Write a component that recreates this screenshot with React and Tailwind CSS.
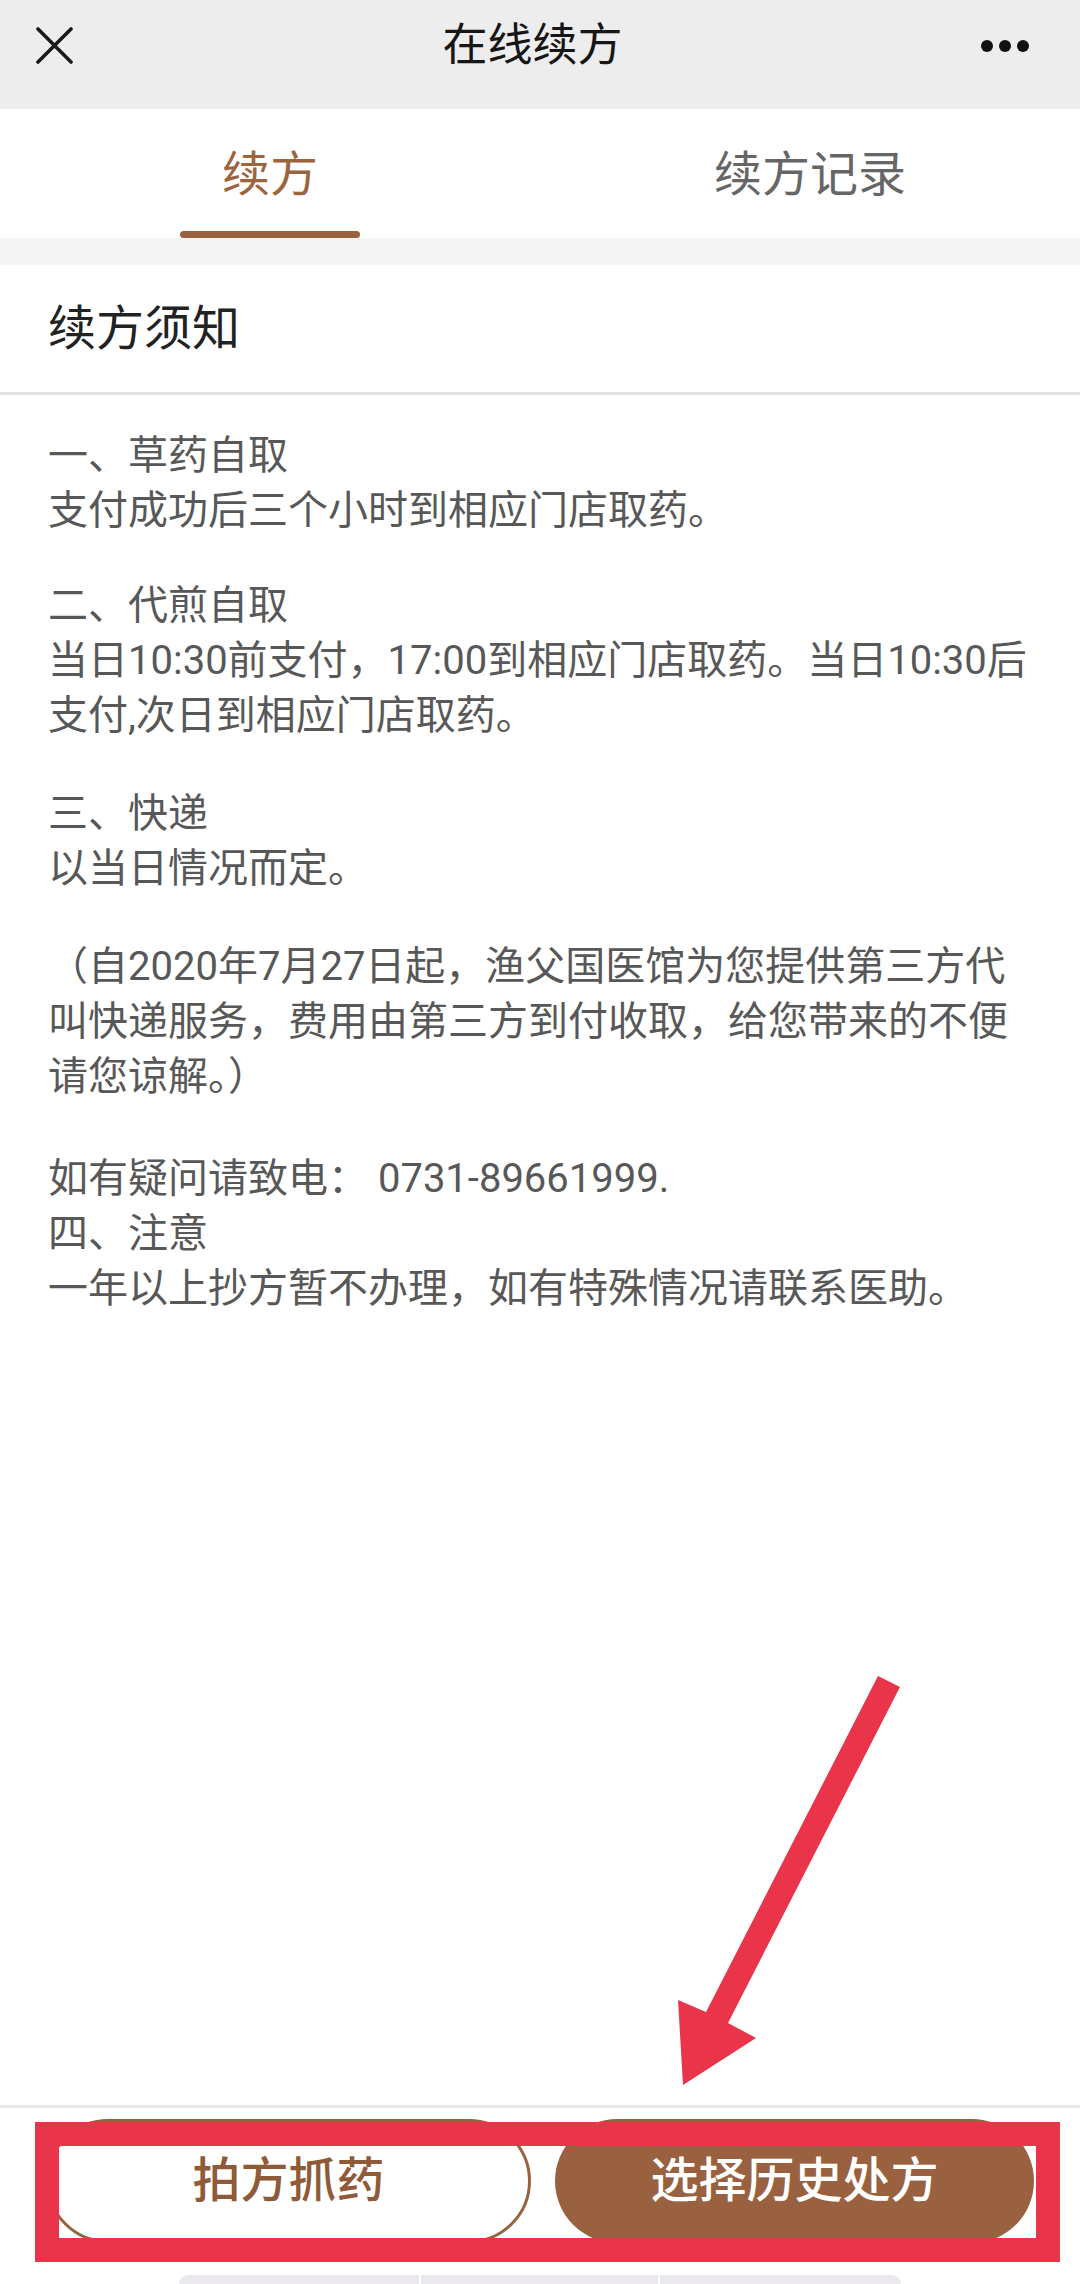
export default function App() {
  const p = "block whitespace-nowrap";
  return (
    <div className="relative w-[1080px] h-[2284px] bg-white flex flex-col overflow-hidden font-['Roboto','Noto_Sans_CJK_SC',sans-serif]">
      {/* Header */}
      <div className="h-[109px] shrink-0 bg-[#ededed] grid grid-cols-[1fr_auto_1fr] items-center pl-[36px] pr-[51px] pb-[18px]">
        <div className="flex justify-start">
          <svg width="37" height="37" viewBox="0 0 37 37">
            <path d="M2 2L35 35M35 2L2 35" stroke="#1a1a1a" strokeWidth="3.6" strokeLinecap="round" />
          </svg>
        </div>
        <div className="text-[45px] leading-none text-[#161616]">在线续方</div>
        <div className="flex justify-end gap-[6px]">
          <span className="w-[12px] h-[12px] rounded-full bg-[#111]" />
          <span className="w-[12px] h-[12px] rounded-full bg-[#111]" />
          <span className="w-[12px] h-[12px] rounded-full bg-[#111]" />
        </div>
      </div>

      {/* Tabs */}
      <div className="h-[129px] shrink-0 grid grid-cols-2 bg-white">
        <div className="flex flex-col items-center h-full">
          <div className="flex-1 flex items-center pt-[10px] text-[48px] leading-none text-[#9d6440]">续方</div>
          <div className="w-[180px] h-[7px] rounded-full bg-[#9a6140]" />
        </div>
        <div className="flex flex-col items-center h-full">
          <div className="flex-1 flex items-center pt-[10px] text-[48px] leading-none text-[#666]">续方记录</div>
          <div className="h-[7px]" />
        </div>
      </div>

      <div className="h-[27px] shrink-0 bg-[#f5f5f5]" />

      {/* Section title */}
      <div className="h-[127px] shrink-0 flex items-center px-[48px] text-[48px] leading-none text-[#222]">续方须知</div>
      <div className="h-[3px] shrink-0 bg-[#e0e0e0]" />

      {/* Body */}
      <div className="flex-1 px-[48px] pt-[33px] text-[40px] leading-[55px] text-[#585858]">
        <p>
          <span className={p}>一、草药自取</span>
          <span className={p}>支付成功后三个小时到相应门店取药。</span>
        </p>
        <p className="mt-[40px]">
          <span className={p}>二、代煎自取</span>
          <span className={p}>当日10:30前支付，17:00到相应门店取药。当日10:30后</span>
          <span className={p}>支付,次日到相应门店取药。</span>
        </p>
        <p className="mt-[43px]">
          <span className={p}>三、快递</span>
          <span className={p}>以当日情况而定。</span>
        </p>
        <p className="mt-[43px]">
          <span className={p}>（自2020年7月27日起，渔父国医馆为您提供第三方代</span>
          <span className={p}>叫快递服务，费用由第三方到付收取，给您带来的不便</span>
          <span className={p}>请您谅解。）</span>
        </p>
        <p className="mt-[47px]">
          <span className={p}>如有疑问请致电： 0731-89661999.</span>
          <span className={p}>四、注意</span>
          <span className={p}>一年以上抄方暂不办理，如有特殊情况请联系医助。</span>
        </p>
      </div>

      {/* Footer */}
      <div className="h-[179px] shrink-0 border-t-[3px] border-[#e8e8e8] flex flex-col bg-white">
        <div className="mt-[11px] h-[124px] px-[46px] flex gap-[24px]">
          <button className="flex-1 rounded-full border-[3px] border-[#9a6140] bg-white flex items-center justify-center text-[48px] leading-none font-medium text-[#8f5a37]">拍方抓药</button>
          <button className="flex-1 rounded-full bg-[#9a6140] flex items-center justify-center text-[48px] leading-none font-medium text-white">选择历史处方</button>
        </div>
        <div className="mt-auto h-[9px] flex justify-center gap-[2px]">
          <div className="w-[240px] rounded-tl-[9px] bg-[#ebe9ed]" />
          <div className="w-[237px] bg-[#ebe9ed]" />
          <div className="w-[241px] rounded-tr-[9px] bg-[#ebe9ed]" />
        </div>
      </div>

      {/* Red annotation overlay */}
      <div className="absolute left-[35px] top-[2122px] w-[1025px] h-[140px] border-[24px] border-[#e9344a] pointer-events-none" />
      <svg className="absolute left-0 top-0 pointer-events-none" width="1080" height="2284" viewBox="0 0 1080 2284">
        <polygon
          points="878,1676 900,1687 728,2023 756,2038 683,2085 678,2000 706,2012"
          fill="#e9344a"
        />
      </svg>
    </div>
  );
}
